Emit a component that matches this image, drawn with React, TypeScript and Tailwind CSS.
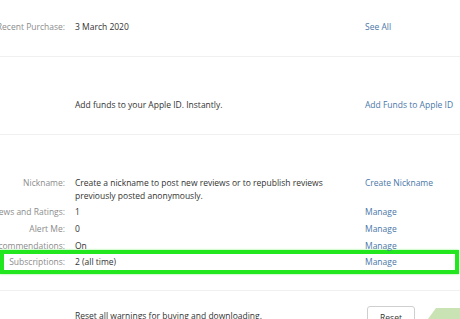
const rows = [
  { label: 'Reviews and Ratings:', value: '1', link: 'Manage' },
  { label: 'Alert Me:', value: '0', link: 'Manage' },
  { label: 'Recommendations:', value: 'On', link: 'Manage' },
];

function Label({ children }: { children: React.ReactNode }) {
  return (
    <div className="flex w-[65px] shrink-0 justify-end whitespace-nowrap text-[#8c8c8c]">
      {children}
    </div>
  );
}

function Row({
  label,
  value,
  link,
  className = '',
}: {
  label?: string;
  value: React.ReactNode;
  link?: string;
  className?: string;
}) {
  return (
    <div className={`flex items-start ${className}`}>
      <Label>{label}</Label>
      <div className="ml-[10px] w-[290px] shrink-0 text-[#333]">{value}</div>
      {link && <div className="whitespace-nowrap text-[#4a77a8]">{link}</div>}
    </div>
  );
}

export default function App() {
  return (
    <div
      className="relative h-[319px] w-[460px] overflow-hidden bg-white text-[8.5px] leading-[17px]"
      style={{ fontFamily: '"Open Sans", "Noto Sans", sans-serif' }}
    >
      <div className="pt-[18px] pb-[21px]">
        <Row label="Recent Purchase:" value="3 March 2020" link="See All" />
      </div>
      <div className="h-px bg-[#f0f0f0]" />

      <div className="pt-[39px] pb-[21px]">
        <Row value="Add funds to your Apple ID. Instantly." link="Add Funds to Apple ID" />
      </div>
      <div className="h-px bg-[#f0f0f0]" />

      <div className="pt-[39px]">
        <Row
          label="Nickname:"
          value={
            <span className="block w-[250px] pt-[2px] leading-[13px]">
              Create a nickname to post new reviews or to republish reviews previously posted anonymously.
            </span>
          }
          link="Create Nickname"
          className="mb-[1px]"
        />
        {rows.map((r) => (
          <Row key={r.label} label={r.label} value={r.value} link={r.link} />
        ))}
        <div className="-mt-[4px] box-border h-[24px] w-[459px] border-[4px] border-[#22e61e] pt-[1px] shadow-[0_0_2px_#7ef07a]">
          <div className="-ml-[4px] -mt-[4px] pt-[2px]">
            <Row label="Subscriptions:" value="2 (all time)" link="Manage" />
          </div>
        </div>
      </div>

      <div className="mt-[16px] h-px bg-[#f0f0f0]" />

      <div className="flex items-start pt-[16px]">
        <div className="w-[75px] shrink-0" />
        <div className="w-[292px] shrink-0 text-[#333]">Reset all warnings for buying and downloading.</div>
        <div className="mt-[-1px] h-[20px] w-[48px] rounded-[3px] border border-[#cfcfcf] bg-white pt-[2px] text-center text-[#333]">
          Reset
        </div>
      </div>
      <div className="absolute bottom-0 left-[428px] h-[11px] w-[50px] rounded-tl-[3px] bg-[#c9e3b4] [clip-path:polygon(8px_0,100%_0,100%_100%,0_100%)]" />
    </div>
  );
}
